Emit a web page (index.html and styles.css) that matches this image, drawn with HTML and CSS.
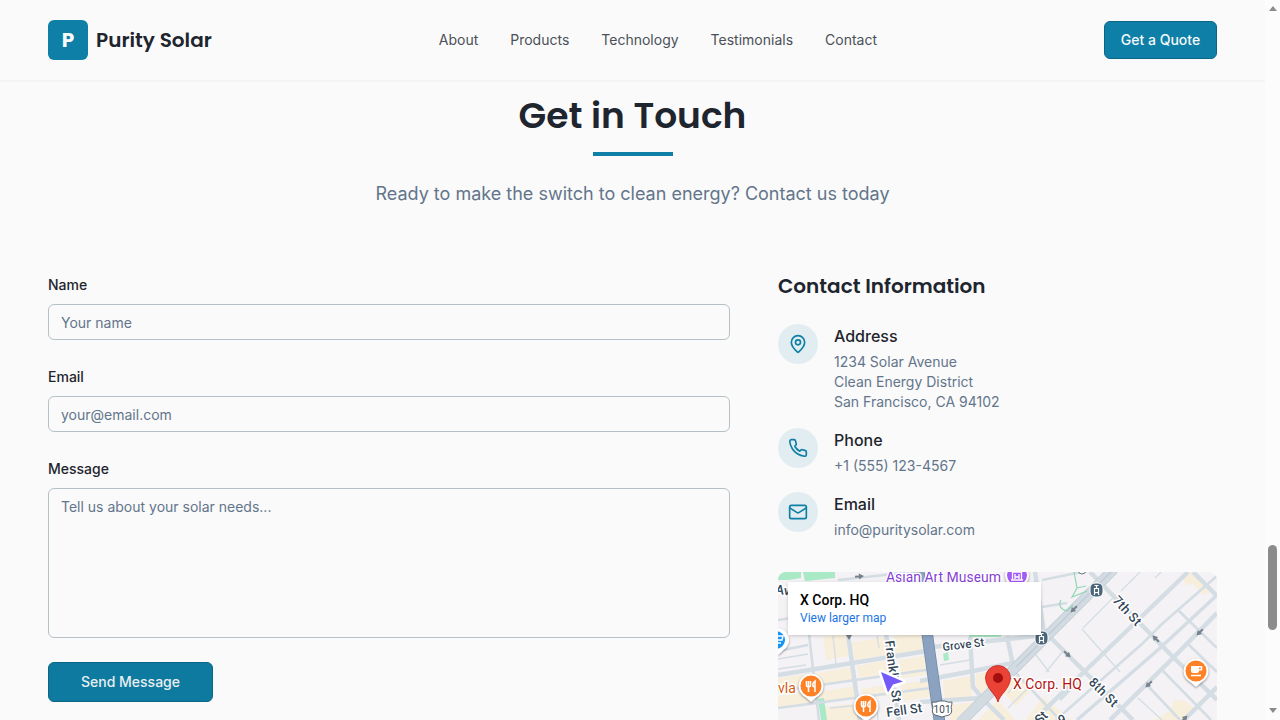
FILE: index.html
```html
<!DOCTYPE html>
<html lang="en">
<head>
<meta charset="utf-8">
<title>Purity Solar</title>
<link rel="stylesheet" href="styles.css">
</head>
<body>
<div class="page">
  <header class="header">
    <a class="brand"><span class="brand-mark">P</span><span class="brand-name">Purity Solar</span></a>
    <nav class="nav"><a>About</a><a>Products</a><a>Technology</a><a>Testimonials</a><a>Contact</a></nav>
    <button class="btn quote">Get a Quote</button>
  </header>
  <main class="contact">
    <h1 class="title">Get in Touch</h1>
    <div class="rule"></div>
    <p class="lead">Ready to make the switch to clean energy? Contact us today</p>
    <div class="columns">
      <form class="form">
        <label class="label" for="name">Name</label>
        <input class="field" id="name" placeholder="Your name">
        <label class="label" for="email">Email</label>
        <input class="field" id="email" placeholder="your@email.com">
        <label class="label" for="message">Message</label>
        <textarea class="field area" id="message" placeholder="Tell us about your solar needs..."></textarea>
        <button type="button" class="btn send">Send Message</button>
      </form>
      <section class="info">
        <h2 class="info-title">Contact Information</h2>
        <div class="item">
          <span class="circle"><svg class="icon" viewBox="0 0 24 24"><path d="M20 10c0 4.993-5.539 10.193-7.399 11.799a1 1 0 0 1-1.202 0C9.539 20.193 4 14.993 4 10a8 8 0 0 1 16 0"/><circle cx="12" cy="10" r="3"/></svg></span>
          <div><h3 class="item-title">Address</h3><p class="item-text">1234 Solar Avenue<br>Clean Energy District<br>San Francisco, CA 94102</p></div>
        </div>
        <div class="item">
          <span class="circle"><svg class="icon" viewBox="0 0 24 24"><path d="M22 16.92v3a2 2 0 0 1-2.18 2 19.79 19.79 0 0 1-8.63-3.07 19.5 19.5 0 0 1-6-6 19.79 19.79 0 0 1-3.07-8.67A2 2 0 0 1 4.11 2h3a2 2 0 0 1 2 1.72 12.84 12.84 0 0 0 .7 2.81 2 2 0 0 1-.45 2.11L8.09 9.91a16 16 0 0 0 6 6l1.27-1.27a2 2 0 0 1 2.11-.45 12.84 12.84 0 0 0 2.81.7A2 2 0 0 1 22 16.92z"/></svg></span>
          <div><h3 class="item-title">Phone</h3><p class="item-text">+1 (555) 123-4567</p></div>
        </div>
        <div class="item">
          <span class="circle"><svg class="icon" viewBox="0 0 24 24"><rect x="2" y="4" width="20" height="16" rx="2"/><path d="m22 7-8.97 5.7a1.94 1.94 0 0 1-2.06 0L2 7"/></svg></span>
          <div><h3 class="item-title">Email</h3><p class="item-text">info@puritysolar.com</p></div>
        </div>
        <div class="map">
          <svg class="map-art" viewBox="778 572 439 148">
            <rect class="land" x="778" y="572" width="439" height="148"/>
            <g class="block">
              <path d="M823 637l23-3 3 22-23 4zM852 642l36-5 2 17-35 6zM893 636l30-3 4 18-31 5zM778 678l29-4 2 12-31 5zM812 674l40-7 2 13-41 6zM857 666l38-7 2 13-38 6zM899 660l30-5 4 19-31 4zM818 692l38-6 2 12-38 5zM778 696l30-5 2 12-32 4zM862 689l30-5 2 11-31 4zM823 707l36-4 2 17h-36zM901 684l32-5 4 17-34 5z"/>
              <path d="M943 681l28-5 1 21-27 3zM976 674l37-6-27 29-10-9zM948 705l30-3-17 18h-11zM1001 690l15-15 15 15-15 16zM978 720l20-20 17 20zM1043 697l28 23h-45zM1183 577l9-5 20 18-8 5-11-11-8 1zM1154 720l16-9 4-11 11 1 11 9-9 10zM900 572h13l1 10h-14z"/>
            </g>
            <path class="park" d="M778 572h23v6l-12 2h-11zM803 572h32v6l-30 3zM969 637h32v-3h-32zM818 699l6-1 3 22h-6zM943 654l5-2 1 8-5 1z"/>
            <g class="road thin">
              <path d="M778 659l30-5M778 669l28-4M833 636l3 28M970 660l-30 5M877 636l2 12M1036 655l13 17M1046 672l18-22M1008 693l12-13M1028 688l-20 20M1082 629l38 43M1083 628l33-33M1121 591l19-19M1155 578l12-12M1138 698l24 22M876 699l2 21M830 708l30-3"/>
            </g>
            <g class="road small">
              <path d="M838 580l75-8M778 620l25-4M809 634l10 86M778 651l30-6M778 691l155-22M778 708l160-21M1217 576l-54 47-20 20-87 77M1060 700l17-17M1177 609l40 39M1187 643l30 29M1163 671l48 49M1148 686l32 34M1015 672l45 48M1042 580l50-10M1042 607l25-4"/>
            </g>
            <g class="road mid"><path d="M1217 595l-58 54-82 71"/></g>
            <g class="road main">
              <path d="M778 675l155-25M848 634l12 86M886 634l13 86M920 681l53-10 40-8M920 702l61-4M932 647l104-11M970 637l3 50 9 11 22 22M1007 636l6 29M1035 572l9 60M1188 572l-50 48-104 100M1217 613l-43 44-64 63M1217 687l-33 33M1090 572l83 85 44 43M1050 637l83 83M1193 572l24 24M1048 630l-30 36"/>
            </g>
            <path class="market-edge" d="M1114 569l-154 154"/>
            <path class="market" d="M1114 569l-154 154"/>
            <path class="market-mid" d="M1114 569l-98 98"/>
            <path class="highway-edge" d="M918 565l11 82 11 78"/>
            <path class="highway" d="M918 565l11 82 11 78"/>
            <path class="trail" d="M1074 572l3 16-5 9 15-6M1077 588l9-2M1061 600c-3 5 0 10 6 11l6-6"/>
            <g class="arrow">
              <path d="M-4-1H0V-3L5 0 0 3V1H-4Z" transform="translate(859 576.500) rotate(-5)"/>
              <path d="M-4-1H0V-3L5 0 0 3V1H-4Z" transform="translate(1074 609) rotate(135)"/>
              <path d="M-4-1H0V-3L5 0 0 3V1H-4Z" transform="translate(1067 654) rotate(42)"/>
              <path d="M-4-1H0V-3L5 0 0 3V1H-4Z" transform="translate(1156 639) rotate(-135)"/>
              <path d="M-4-1H0V-3L5 0 0 3V1H-4Z" transform="translate(1200 632) rotate(135)"/>
              <path d="M-4-1H0V-3L5 0 0 3V1H-4Z" transform="translate(1149 684) rotate(135)"/>
              <path d="M-4-1H0V-3L5 0 0 3V1H-4Z" transform="translate(1184 719) rotate(-45)"/>
              <path d="M-4-1H0V-3L5 0 0 3V1H-4Z" transform="translate(849 635) rotate(90)"/>
            </g>
            <g class="street">
              <text x="775" y="594" transform="rotate(8 778 594)">Av</text>
              <text transform="translate(885 641) rotate(83)" textLength="62">Franklin St</text>
              <text class="grove" transform="translate(943 651) rotate(-7)" textLength="42">Grove St</text>
              <text transform="translate(887 717) rotate(-8)" textLength="36">Fell St</text>
              <text transform="translate(1112 601) rotate(47)" textLength="35">7th St</text>
              <text transform="translate(1088 683) rotate(45)" textLength="35">8th St</text>
              <text transform="translate(1040 725) rotate(-45)">St</text>
              <text transform="translate(1060 725) rotate(-20)">9</text>
            </g>
            <text class="museum" x="886" y="582" textLength="115">Asian Art Museum</text>
            <text class="food-name" x="778" y="693">vla</text>
            <g class="pin purple"><circle cx="1017" cy="575" r="11"/><path d="M1012.500 580v-8h9v8zM1015 574v5M1019 574v5M1015 577h4M1011 580h12"/></g>
            <g class="pin blue"><path d="M778 628a12 12 0 0 1 8 20l-8 7z"/><circle cx="776" cy="640" r="10"/><path class="glyph" d="M776 636h7l-1 4h-6M778 643h3"/></g>
            <g class="pin"><path d="M803 695l8 7 8-7z"/><circle cx="811" cy="686" r="11.500"/><path class="glyph" d="M806.500 681v4a2 2 0 0 0 4 0v-4M808.500 681v11M815 692v-11c-3 2-3 6 0 6"/></g>
            <g class="pin"><path d="M858 715l8 7 8-7z"/><circle cx="866" cy="706" r="11.500"/><path class="glyph" d="M861.500 701v4a2 2 0 0 0 4 0v-4M863.500 701v11M870 712v-11c-3 2-3 6 0 6"/></g>
            <g class="pin"><path d="M1188 680l8 7 8-7z"/><circle cx="1196" cy="671" r="11.500"/><path class="cup" d="M1191 666h8v5a2 2 0 0 1-2 2h-4a2 2 0 0 1-2-2z"/><path class="glyph" d="M1199 666.700h2.500v3h-2.500M1191 675.500h10"/></g>
            <g class="station"><rect x="1090" y="583" width="13" height="14" rx="5"/><rect x="1035" y="631" width="13" height="14" rx="5"/>
              <path d="M1094.500 585.500h4M1094.500 588.500h4v4h-4zM1094 595l1-2M1099 595l-1-2M1096.500 586v2M1039.500 633.500h4M1039.500 636.500h4v4h-4zM1039 643l1-2M1044 643l-1-2M1041.500 634v2"/></g>
            <circle class="stop" cx="1082" cy="570" r="4"/>
            <path class="cursor" d="M881 672l22 9.500-10 3-5 8z"/>
            <g class="shield"><path d="M932 702q4 1 7-1h6q3 2 7 1 0 3-1 5 2 6-2 8-4 1-7 2-3-1-7-2-4-2-2-8-1-2-1-5z"/><text x="933.500" y="713" textLength="17">101</text></g>
            <path class="marker" d="M998 702c-2-8-12-13-12.500-24a12.500 12.500 0 0 1 25 0c-.5 11-10.500 16-12.500 24z"/>
            <circle class="marker-dot" cx="998" cy="678" r="5"/>
            <text class="hq" x="1013" y="689" textLength="69">X Corp. HQ</text>
          </svg>
          <div class="map-card"><strong class="map-name">X Corp. HQ</strong><a class="map-link">View larger map</a></div>
        </div>
      </section>
    </div>
  </main>
</div>
<div class="scrollbar"><i class="up"></i><i class="thumb"></i><i class="down"></i></div>
</body>
</html>
```
FILE: styles.css
```css
* { box-sizing: border-box; }
body { margin: 0; display: flex; height: 720px; overflow: hidden; background: #fafafa; color: #1e252e; font-family: Inter, sans-serif; }
h1, h2, h3, p { margin: 0; }
.page { width: 1265px; height: 720px; overflow: hidden; }
.header { height: 81px; padding: 0 48px; display: flex; justify-content: space-between; align-items: center; border-bottom: 1px solid #f1f2f2; box-shadow: 0 1px 2px rgba(0,0,0,.025); }
.brand { display: flex; align-items: center; gap: 8px; font: 600 20px Poppins, Inter, sans-serif; }
.brand-mark { width: 40px; height: 40px; border-radius: 6px; background: #0e7fa6; color: #fafafa; display: grid; place-items: center; font-weight: 700; }
.brand-name { white-space: nowrap; }
.nav { display: flex; gap: 32px; font-size: 14px; line-height: 20px; color: #4b5058; }
.btn { border: 1px solid #0b6685; border-radius: 6px; background: #0e7fa6; color: #f4f9fb; font: 500 14px/20px Inter, sans-serif; }
.quote { width: 113px; height: 38px; padding: 0; }
.contact { padding: 10px 48px 0; }
.title { font: 600 36px/50px Poppins, Inter, sans-serif; text-align: center; }
.rule { width: 80px; height: 4px; margin: 11px auto 24px; background: #0e7fa6; position: relative; left: .5px; }
.lead { font-size: 18px; line-height: 28px; text-align: center; color: #63758a; }
.columns { display: grid; grid-template-columns: 682px 439px; gap: 48px; margin-top: 67px; }
.form { display: flex; flex-direction: column; align-items: flex-start; }
.label { font-size: 14px; line-height: 20px; font-weight: 500; margin-bottom: 9px; }
.field { width: 100%; height: 36px; margin: 0 0 27px; padding: 0 12px; border: 1px solid #b5c1c7; border-radius: 6px; background: transparent; font: 14px/20px Inter, sans-serif; outline: 0; resize: none; }
.field::placeholder { color: #63758a; opacity: 1; }
.area { height: 150px; padding: 8px 12px; margin-bottom: 24px; }
.send { width: 165px; height: 40px; background: #0e7aa0; color: #e9eff1; }
.info-title { font: 600 20px/22px Poppins, Inter, sans-serif; margin-bottom: 27px; }
.item { display: flex; gap: 16px; margin-bottom: 16px; }
.circle { width: 40px; height: 40px; border-radius: 50%; background: #e2edf1; display: grid; place-items: center; }
.icon { width: 20px; height: 20px; fill: none; stroke: #0e7fa6; stroke-width: 2; stroke-linecap: round; stroke-linejoin: round; }
.item-title { font-size: 16px; line-height: 24px; font-weight: 500; margin-bottom: 4px; }
.item-text { font-size: 14px; line-height: 20px; color: #63758a; }
.map { height: 148px; margin-top: 32px; border-radius: 8px 8px 0 0; overflow: hidden; position: relative; }
.map-art { display: block; width: 439px; height: 148px; font-family: Roboto, sans-serif; }
.map-card { position: absolute; left: 10px; top: 10px; width: 253px; height: 53px; padding: 9px 12px; background: #fff; box-shadow: 0 1px 4px -1px rgba(0,0,0,.3); font-family: Roboto, sans-serif; display: flex; flex-direction: column; }
.map-name { font-size: 14px; line-height: 18px; font-weight: 500; color: #000; }
.map-link { font-size: 12px; line-height: 19px; color: #1a73e8; }
.land { fill: #f4f2f4; }
.block { fill: #f7eedb; }
.park { fill: #a9e9c5; }
.road { fill: none; stroke: #d4dde4; }
.thin { stroke-width: 1.3; }
.small { stroke-width: 2.6; }
.mid { stroke-width: 3.5; }
.main { stroke-width: 4.5; }
.market-edge { fill: none; stroke: #c3cdd6; stroke-width: 10.5; }
.market { fill: none; stroke: #d2dae2; stroke-width: 9; }
.market-mid { fill: none; stroke: #c3cbd6; stroke-width: 1.5; }
.highway-edge { fill: none; stroke: #7189a8; stroke-width: 11.5; }
.highway { fill: none; stroke: #8ba3c1; stroke-width: 10; }
.trail { fill: none; stroke: #91d6b5; stroke-width: 1.2; }
.arrow { fill: #76818b; }
.street { font-size: 13px; font-weight: 500; fill: #344859; stroke: #fff; stroke-width: 3px; paint-order: stroke; }
.grove { font-size: 11.5px; }
.museum, .food-name, .hq { font-size: 14px; stroke: #fff; stroke-width: 3px; paint-order: stroke; }
.museum { fill: #8640d8; }
.food-name { fill: #d35c12; }
.hq { fill: #b31412; }
.pin { fill: #fff; filter: drop-shadow(0 1px 1px rgba(0,0,0,.4)); }
.pin circle { fill: #ff8126; stroke: #fff; stroke-width: 2; }
.pin.purple circle { fill: #a35bf5; }
.purple path { fill: none; stroke: #fff; stroke-width: 1.3; }
.pin.blue circle { fill: #1594f6; }
.pin .glyph { fill: none; stroke: #fff; stroke-width: 1.5; }
.cup { fill: #fff; }
.station rect { fill: #4b6477; stroke: #fff; stroke-width: 1; }
.station path { fill: none; stroke: #fff; stroke-width: 1.2; }
.stop { fill: #fff; stroke: #657584; stroke-width: 1; }
.cursor { fill: #7659fb; stroke: #fff; stroke-width: 5; stroke-linejoin: round; paint-order: stroke; }
.shield path { fill: #fff; stroke: #5f6972; stroke-width: 1; }
.shield text { font-size: 10px; fill: #3d4852; }
.marker { fill: #ea4335; stroke: #c5221f; stroke-width: .8; }
.marker-dot { fill: #a50e0e; }
.scrollbar { width: 15px; height: 720px; padding: 6px 0 7px; background: #fcfcfc; display: flex; flex-direction: column; align-items: center; }
.up { border: 4.5px solid transparent; border-top: 0; border-bottom: 5px solid #8b8b8b; }
.thumb { width: 9px; height: 85px; margin-top: 534px; border-radius: 5px; background: #8b8b8b; }
.down { margin-top: auto; border: 4.5px solid transparent; border-bottom: 0; border-top: 5px solid #8b8b8b; }
```
